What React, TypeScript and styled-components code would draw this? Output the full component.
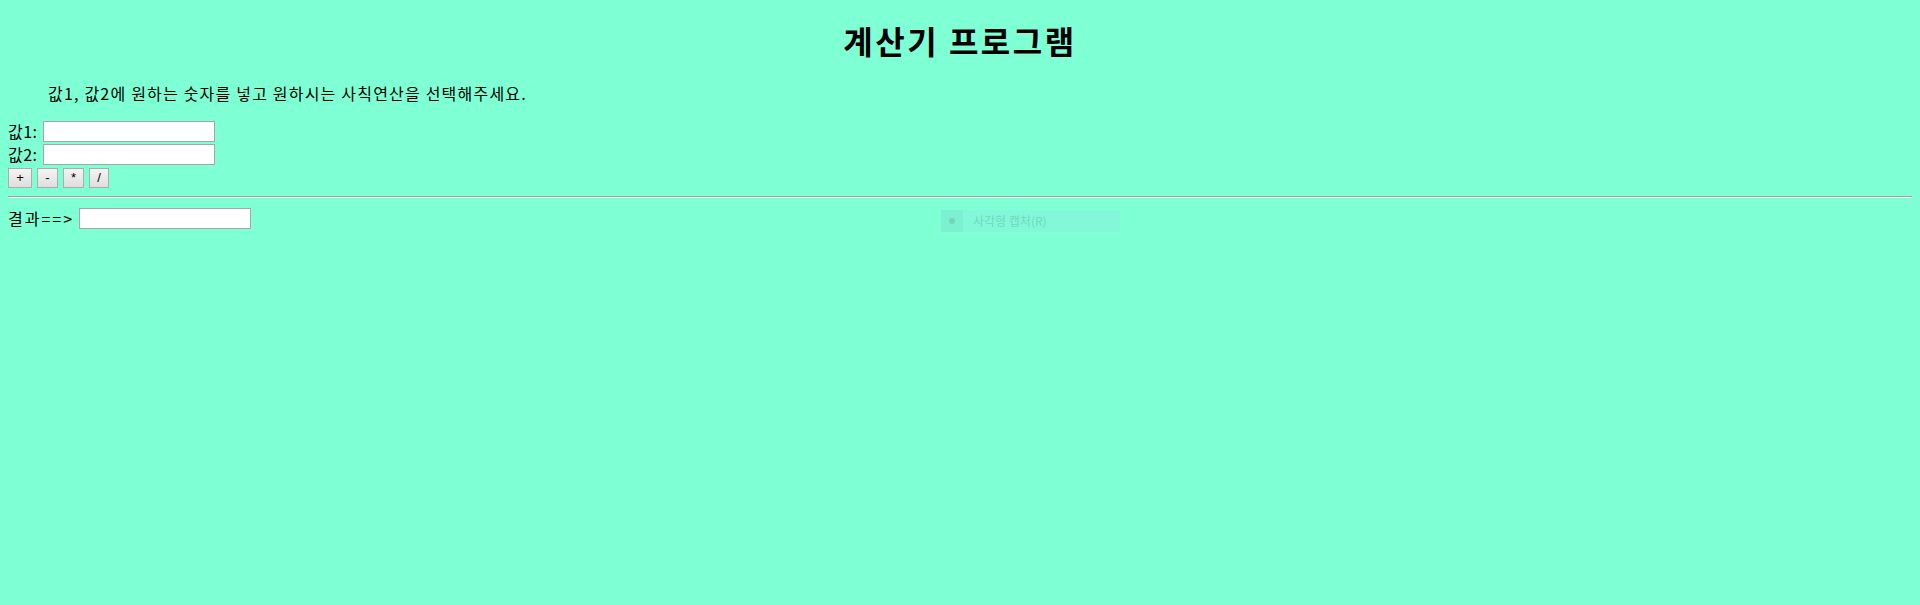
import React from "react";
import styled, { createGlobalStyle } from "styled-components";

const Global = createGlobalStyle`
  html, body {
    margin: 0;
    padding: 0;
    background: #7fffd4;
  }
  body {
    font-family: "Noto Sans CJK KR", "Noto Sans", sans-serif;
    color: #000;
  }
`;

const Page = styled.div`
  position: relative;
  padding: 8px;
  min-height: 589px;
  display: flex;
  flex-direction: column;
`;

const Title = styled.h1`
  margin: 11px 0 0;
  font-size: 32px;
  line-height: 42px;
  font-weight: 700;
  letter-spacing: 2.5px;
  text-align: center;
`;

const Intro = styled.blockquote`
  margin: 22px 0 0 40px;
  font-size: 16px;
  line-height: 21px;
  letter-spacing: 1.2px;
`;

const Form = styled.div`
  margin-top: 16px;
  display: flex;
  flex-direction: column;
`;

const Row = styled.div`
  height: 23px;
  display: flex;
  align-items: center;
  gap: 5px;
  font-size: 16px;
`;

const Label = styled.span<{ $spacing?: number }>`
  line-height: 21px;
  white-space: pre;
  letter-spacing: ${(p) => p.$spacing ?? 0.5}px;
`;

const Field = styled.input`
  box-sizing: border-box;
  width: 172px;
  height: 21px;
  margin: 0;
  padding: 1px 2px;
  border: 1px solid #a6a6a6;
  background: #fff;
  font-size: 13px;
  outline: none;
`;

const OpButton = styled.button<{ $w: number }>`
  box-sizing: border-box;
  width: ${(p) => p.$w}px;
  height: 20px;
  margin: 0;
  padding: 0;
  border: 1px solid #acacac;
  border-radius: 0;
  background: linear-gradient(#f4f4f4, #dedede);
  font-family: "Liberation Sans", Arial, sans-serif;
  font-size: 13px;
  line-height: 18px;
  color: #000;
`;

const Rule = styled.hr`
  margin: 7px 0 0;
  height: 0;
  border: none;
  border-top: 1px solid #a0a0a0;
  border-bottom: 1px solid #eeeeee;
`;

const ResultRow = styled(Row)`
  margin-top: 9px;
  gap: 5px;
`;

const Ghost = styled.div`
  position: absolute;
  left: 941px;
  top: 210px;
  width: 179px;
  height: 22px;
  display: flex;
  align-items: center;
  background: #85f7d9;
`;

const GhostIcon = styled.div`
  width: 22px;
  height: 22px;
  display: flex;
  align-items: center;
  justify-content: center;
  background: #7df0d1;
  &::after {
    content: "";
    width: 6px;
    height: 6px;
    border-radius: 50%;
    background: #6fd8b8;
  }
`;

const GhostText = styled.span`
  margin-left: 10px;
  font-size: 12px;
  line-height: 22px;
  color: #6cdbb9;
`;

const ops: { s: string; w: number }[] = [
  { s: "+", w: 24 },
  { s: "-", w: 21 },
  { s: "*", w: 21 },
  { s: "/", w: 20 },
];

export default function App() {
  return (
    <>
      <Global />
      <Page>
        <Title>계산기 프로그램</Title>
        <Intro>값1, 값2에 원하는 숫자를 넣고 원하시는 사칙연산을 선택해주세요.</Intro>
        <Form>
          <Row>
            <Label>값1:</Label>
            <Field type="text" />
          </Row>
          <Row>
            <Label>값2:</Label>
            <Field type="text" />
          </Row>
          <Row>
            {ops.map((o) => (
              <OpButton key={o.s} $w={o.w}>
                {o.s}
              </OpButton>
            ))}
          </Row>
        </Form>
        <Rule />
        <ResultRow>
          <Label $spacing={2}>결과==&gt;</Label>
          <Field type="text" />
        </ResultRow>
        <Ghost>
          <GhostIcon />
          <GhostText>사각형 캡처(R)</GhostText>
        </Ghost>
      </Page>
    </>
  );
}
